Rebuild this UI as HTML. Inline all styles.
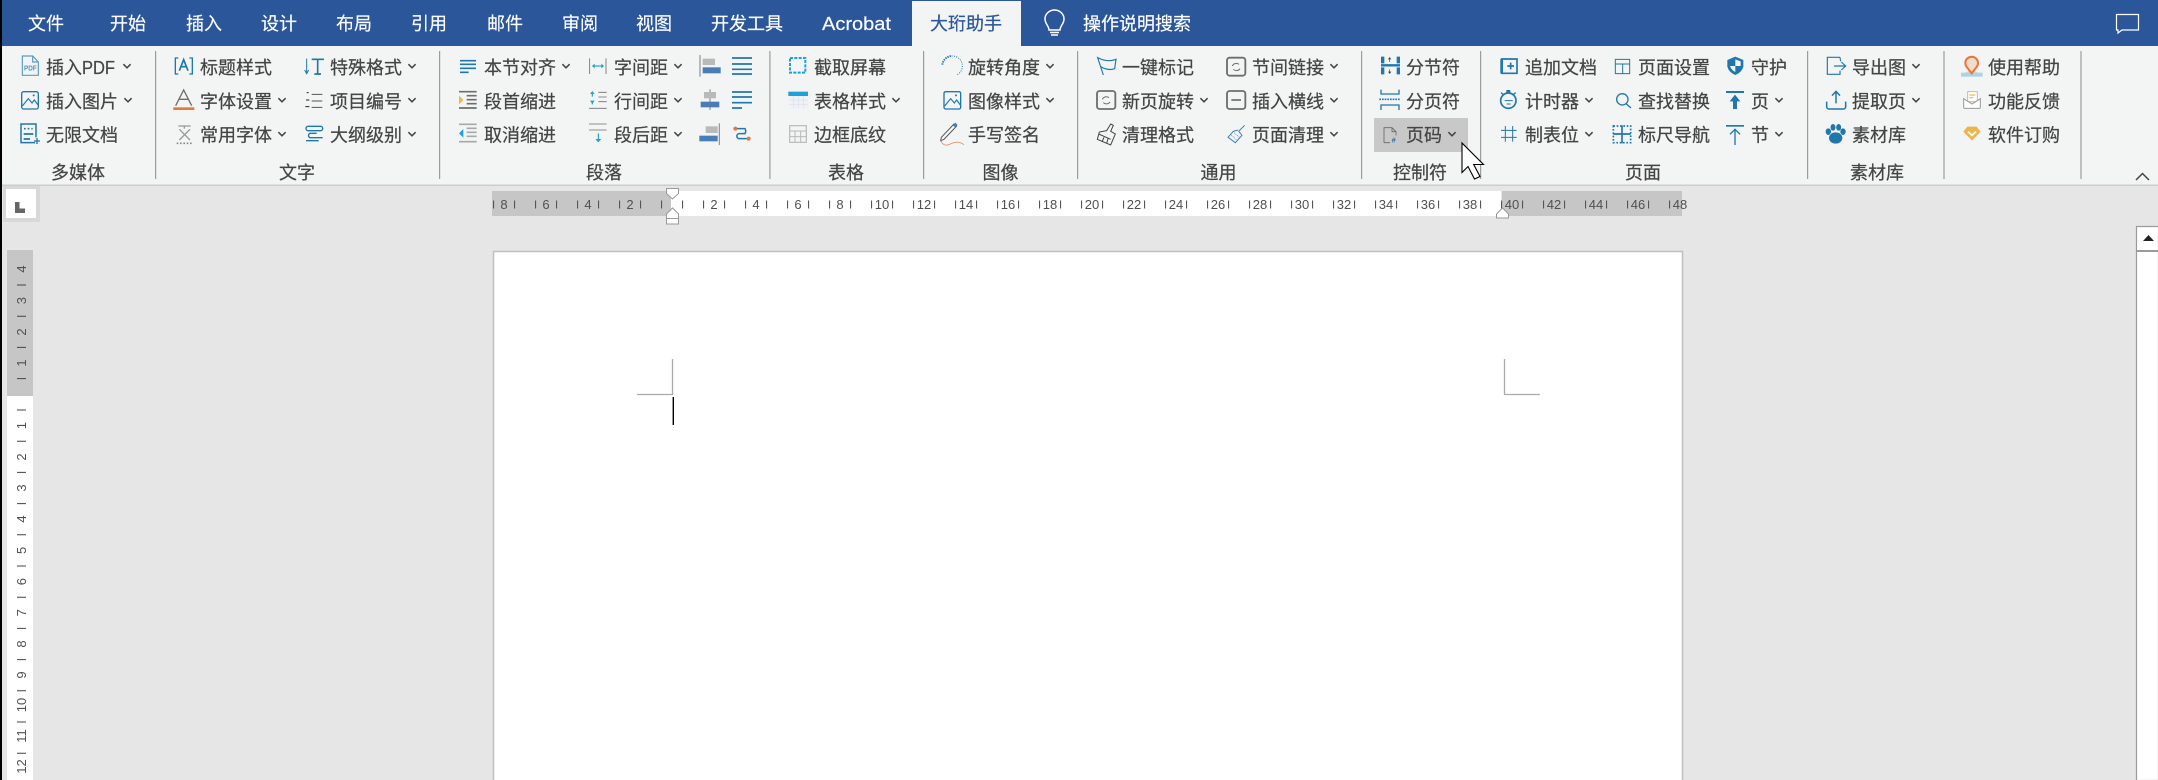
<!DOCTYPE html>
<html><head><meta charset="utf-8"><style>
html,body{margin:0;padding:0;background:#e6e6e6;overflow:hidden}
svg{display:block}
.t{font:18px "Liberation Sans","Noto Sans CJK SC",sans-serif;fill:#444;stroke:#444;stroke-width:.22}
.h{font:18px "Liberation Sans","Noto Sans CJK SC",sans-serif;fill:#fff;stroke:#fff;stroke-width:.15}
.m{text-anchor:middle}
.r{font:13px "Liberation Sans",sans-serif;fill:#505050;text-anchor:middle}
.b{fill:none;stroke:#2077ac}
.c{fill:none;stroke:#444;stroke-width:1.5}
.g{fill:none;stroke:#6e6e6e}
</style></head><body>
<svg xmlns="http://www.w3.org/2000/svg" width="2158" height="780" viewBox="0 0 2158 780">
<rect width="2158" height="780" fill="#e6e6e6"/>
<rect width="2158" height="46" fill="#2b579a"/>
<rect y="46" width="2158" height="139" fill="#f3f4f4"/>
<rect y="184.5" width="2158" height="1.5" fill="#cdcdcd"/>
<rect x="912" y="1" width="109" height="46" fill="#f3f4f4"/>

<!-- tabs -->
<text class="h" x="28" y="30">文件</text><text class="h" x="110" y="30">开始</text><text class="h" x="186" y="30">插入</text><text class="h" x="261" y="30">设计</text><text class="h" x="336" y="30">布局</text><text class="h" x="411" y="30">引用</text><text class="h" x="487" y="30">邮件</text><text class="h" x="562" y="30">审阅</text><text class="h" x="636" y="30">视图</text><text class="h" x="711" y="30">开发工具</text><text class="h" x="822" y="30" textLength="69" lengthAdjust="spacingAndGlyphs">Acrobat</text>
<text class="t" x="930" y="30" style="fill:#2b579a;stroke:#2b579a">大珩助手</text>
<text class="h" x="1083" y="30">操作说明搜索</text>
<path d="M1049 30 C1049 26 1045 24 1045 19 A9.5 9 0 0 1 1064 19 C1064 24 1060 26 1060 30 Z M1050 32.5H1059 M1051 35H1058" fill="none" stroke="#fff" stroke-width="1.5"/>
<path d="M2116.5 14.5H2138.5V30H2122L2118 33V30H2116.5Z" fill="none" stroke="#fff" stroke-width="1.2"/>

<!-- separators -->
<g fill="#9c9c9c"><rect x="155" y="51" width="1.2" height="128"/><rect x="439" y="51" width="1.2" height="128"/><rect x="769.3" y="51" width="1.2" height="128"/><rect x="923" y="51" width="1.2" height="128"/><rect x="1077" y="51" width="1.2" height="128"/><rect x="1361" y="51" width="1.2" height="128"/><rect x="1480" y="51" width="1.2" height="128"/><rect x="1807" y="51" width="1.2" height="128"/><rect x="1943.4" y="51" width="1.2" height="128"/><rect x="2080.4" y="51" width="1.2" height="128"/></g>

<rect x="1374" y="118" width="94" height="34" fill="#c8c8c8"/>

<!-- ribbon text -->
<text class="t" x="46" y="74">插入<tspan textLength="33" lengthAdjust="spacingAndGlyphs">PDF</tspan></text><text class="t" x="46" y="108">插入图片</text><text class="t" x="46" y="141.5">无限文档</text>
<text class="t" x="200" y="74">标题样式</text><text class="t" x="200" y="108">字体设置</text><text class="t" x="200" y="141.5">常用字体</text>
<text class="t" x="330" y="74">特殊格式</text><text class="t" x="330" y="108">项目编号</text><text class="t" x="330" y="141.5">大纲级别</text>
<text class="t" x="484" y="74">本节对齐</text><text class="t" x="484" y="108">段首缩进</text><text class="t" x="484" y="141.5">取消缩进</text>
<text class="t" x="614" y="74">字间距</text><text class="t" x="614" y="108">行间距</text><text class="t" x="614" y="141.5">段后距</text>
<text class="t" x="814" y="74">截取屏幕</text><text class="t" x="814" y="108">表格样式</text><text class="t" x="814" y="141.5">边框底纹</text>
<text class="t" x="968" y="74">旋转角度</text><text class="t" x="968" y="108">图像样式</text><text class="t" x="968" y="141.5">手写签名</text>
<text class="t" x="1122" y="74">一键标记</text><text class="t" x="1122" y="108">新页旋转</text><text class="t" x="1122" y="141.5">清理格式</text>
<text class="t" x="1252" y="74">节间链接</text><text class="t" x="1252" y="108">插入横线</text><text class="t" x="1252" y="141.5">页面清理</text>
<text class="t" x="1406" y="74">分节符</text><text class="t" x="1406" y="108">分页符</text><text class="t" x="1406" y="141.5">页码</text>
<text class="t" x="1525" y="74">追加文档</text><text class="t" x="1525" y="108">计时器</text><text class="t" x="1525" y="141.5">制表位</text>
<text class="t" x="1638" y="74">页面设置</text><text class="t" x="1638" y="108">查找替换</text><text class="t" x="1638" y="141.5">标尺导航</text>
<text class="t" x="1751" y="74">守护</text><text class="t" x="1751" y="108">页</text><text class="t" x="1751" y="141.5">节</text>
<text class="t" x="1852" y="74">导出图</text><text class="t" x="1852" y="108">提取页</text><text class="t" x="1852" y="141.5">素材库</text>
<text class="t" x="1988" y="74">使用帮助</text><text class="t" x="1988" y="108">功能反馈</text><text class="t" x="1988" y="141.5">软件订购</text>

<!-- group labels -->
<text class="t m" x="78" y="179">多媒体</text><text class="t m" x="297" y="179">文字</text><text class="t m" x="604" y="179">段落</text><text class="t m" x="846" y="179">表格</text><text class="t m" x="1000.5" y="179">图像</text><text class="t m" x="1218.5" y="179">通用</text><text class="t m" x="1420" y="179">控制符</text><text class="t m" x="1643" y="179">页面</text><text class="t m" x="1877" y="179">素材库</text>

<!-- chevrons -->
<defs><path id="v" d="M-3.6 -1.8L0 1.8L3.6 -1.8"/></defs>
<g class="c">
<use href="#v" x="127" y="66"/><use href="#v" x="128" y="100"/>
<use href="#v" x="282" y="100"/><use href="#v" x="282" y="134"/>
<use href="#v" x="412" y="66"/><use href="#v" x="412" y="100"/><use href="#v" x="412" y="134"/>
<use href="#v" x="566" y="66"/>
<use href="#v" x="678" y="66"/><use href="#v" x="678" y="100"/><use href="#v" x="678" y="134"/>
<use href="#v" x="896" y="100"/>
<use href="#v" x="1050" y="66"/><use href="#v" x="1050" y="100"/>
<use href="#v" x="1204" y="100"/>
<use href="#v" x="1334" y="66"/><use href="#v" x="1334" y="100"/><use href="#v" x="1334" y="134"/>
<use href="#v" x="1452" y="134"/>
<use href="#v" x="1589" y="100"/><use href="#v" x="1589" y="134"/>
<use href="#v" x="1779" y="100"/><use href="#v" x="1779" y="134"/>
<use href="#v" x="1916" y="66"/><use href="#v" x="1916" y="100"/>
</g>
<path d="M2136 180L2142.5 173.5L2149 180" fill="none" stroke="#444" stroke-width="1.5"/>

<!-- icons: group 8 -->
<g transform="translate(10 50) scale(.33333)">
<path d="M37 18H68L85 36V76H37Z M68 18V36H85" fill="none" stroke="#5c9cc8" stroke-width="3.5"/>
<text x="42" y="62" textLength="38" lengthAdjust="spacingAndGlyphs" style="font:bold 23px 'Liberation Sans',sans-serif;fill:#4f95c4">PDF</text>
<rect x="35" y="125" width="50" height="52" rx="6" class="b" stroke-width="4"/>
<path d="M37 168L55 146L66 159L73 150L84 165" class="b" stroke-width="3.5"/><circle cx="71" cy="136" r="3" fill="#2077ac"/>
<path d="M75 278H33V222H78V262" class="b" stroke-width="4.5"/>
<path d="M42 236H68" class="b" stroke-width="5" stroke-dasharray="5 6"/><path d="M41 252H70M41 267H60" class="b" stroke-width="5"/><path d="M72 273H90M81 264V282" class="b" stroke-width="4"/>
<path d="M505 24H496V72H505M538 24H547V72H538" class="b" stroke-width="4"/><path d="M508 62L521 29L534 62M513 50H529" class="b" stroke-width="5"/>
<path d="M497 167L521 120L545 167M507 148H535" class="g" stroke-width="4"/><rect x="490" y="172" width="63" height="8" fill="#e8773c"/>
<path d="M505 228H542M523 228V236M508 238L540 270M540 238L508 270" fill="none" stroke="#999" stroke-width="4"/><path d="M500 280H546" fill="none" stroke="#888" stroke-width="5" stroke-dasharray="5 5"/>
<path d="M905 28H942M923 28V72M913 72H933" class="b" stroke-width="5"/><path d="M890 26V68M884 60L890 71L896 60" class="b" stroke-width="3"/>
<path d="M905 133H937M905 153H937M905 172H937" fill="none" stroke="#555" stroke-width="3"/><path d="M890 128H896M888 150H898M886 170H898" fill="none" stroke="#222" stroke-width="3"/>
<rect x="888" y="229" width="50" height="13" rx="6" class="b" stroke-width="4"/><path d="M920 250H900A7 7 0 0 0 900 263H938M888 272H926" class="b" stroke-width="4"/>
</g>

<!-- icons: group 9 -->
<g transform="translate(450 50) scale(.33333)">
<path d="M30 32H78M30 43H78M30 55H78M30 67H56" class="b" stroke-width="5"/>
<path d="M27 125H80M50 137H80M50 149H80M50 161H80M27 174H80" class="g" stroke-width="5"/><path d="M27 137L40 150L27 163Z" fill="#efb650"/>
<path d="M27 223H80M50 235H80M50 247H80M50 259H80M27 275H80" fill="none" stroke="#a8a8a8" stroke-width="5"/><path d="M40 237L27 250L40 263Z" fill="#1ea1d6"/>
<path d="M419 25V72M468 25V72" class="g" stroke-width="2.5"/><path d="M428 48H460" fill="none" stroke="#1ea1d6" stroke-width="3.5"/><path d="M434 41L426 48L434 55ZM454 41L462 48L454 55Z" fill="#1ea1d6"/>
<path d="M445 127H470M445 141H470M445 155H470M417 175H470" class="g" stroke-width="2.5"/><path d="M427 130V140M427 153V163" fill="none" stroke="#1ea1d6" stroke-width="3.5"/><path d="M420 132L427 123L434 132ZM420 152L427 162L434 152Z" fill="#1ea1d6"/>
<path d="M417 222H470M417 240H470" class="g" stroke-width="2.5"/><path d="M445 250V268" fill="none" stroke="#1ea1d6" stroke-width="3.5"/><path d="M436 267H454L445 277Z" fill="#1ea1d6"/>
<path d="M750 15V80" fill="none" stroke="#8f8f8f" stroke-width="3.5"/><rect x="758" y="26" width="37" height="19" fill="#b9b9b9"/><rect x="758" y="52" width="54" height="18" fill="#4a7db5"/>
<path d="M780 118V180" fill="none" stroke="#8f8f8f" stroke-width="3.5"/><rect x="762" y="126" width="36" height="19" fill="#b9b9b9"/><rect x="752" y="155" width="56" height="17" fill="#4a7db5"/>
<path d="M808 220V285" fill="none" stroke="#8f8f8f" stroke-width="3.5"/><rect x="767" y="229" width="36" height="20" fill="#b9b9b9"/><rect x="748" y="257" width="55" height="17" fill="#4a7db5"/>
<path d="M846 24H906M846 42H906M846 58H906M846 72H906" class="b" stroke-width="5"/>
<path d="M846 126H906M846 141H906M846 158H906M846 174H876" class="b" stroke-width="5"/>
<path d="M860 236H885A15 15 0 0 1 885 251H868A7.5 7.5 0 0 0 868 266H892" class="b" stroke-width="4.5"/><circle cx="856" cy="236" r="6" fill="#e8773c"/><circle cx="896" cy="266" r="6" fill="#e8773c"/>
</g>

<!-- icons: group 10 -->
<g transform="translate(780 50) scale(.33333)">
<path d="M30 24H76V68H30Z" fill="none" stroke="#1ea1d6" stroke-width="6" stroke-dasharray="9 4"/>
<rect x="26" y="125" width="58" height="50" fill="#f0f2f7"/><path d="M26 150H84M26 163H84M41 138V175M55 138V175M70 138V175" fill="none" stroke="#dde3ee" stroke-width="2.5"/><rect x="25" y="125" width="59" height="13" fill="#1ea1d6"/>
<rect x="29" y="227" width="50" height="50" fill="none" stroke="#b8b8b8" stroke-width="3.5"/><path d="M29 243H79M29 260H79M45 243V277M62 243V277" fill="none" stroke="#b8b8b8" stroke-width="3"/>
<path d="M487 44A30 30 0 0 1 515 18" class="b" stroke-width="6" stroke-dasharray="4 3"/><path d="M515 18A30 30 0 0 1 530 75" class="b" stroke-width="3" stroke-dasharray="3 4"/>
<rect x="492" y="125" width="50" height="52" rx="5" class="b" stroke-width="4"/><path d="M494 168L512 146L523 159L530 150L541 165" class="b" stroke-width="3.5"/><circle cx="528" cy="136" r="3" fill="#2077ac"/>
<path d="M522 222L484 262L482 272L492 268L530 228Z" fill="none" stroke="#555" stroke-width="3"/><path d="M518 226L526 218L532 224L526 232Z" fill="#4a7db5"/>
<path d="M483 272C490 292 505 285 515 280C530 274 540 276 552 284" fill="none" stroke="#e0906a" stroke-width="2.5"/>
</g>

<!-- icons: group 11 -->
<g transform="translate(1090 50) scale(.33333)">
<path d="M40 75L23 23C40 32 60 35 78 28L74 56C62 60 48 60 32 50" class="b" stroke-width="3.5"/>
<rect x="411" y="23" width="55" height="54" rx="8" class="g" stroke-width="5.5"/><path d="M447 43A13 13 0 0 0 427 48M430 58A13 13 0 0 0 450 56" fill="none" stroke="#6e6e6e" stroke-width="3"/>
<rect x="21" y="123" width="55" height="54" rx="8" class="g" stroke-width="5.5"/><path d="M57 143A13 13 0 0 0 37 148M40 158A13 13 0 0 0 60 156" fill="none" stroke="#6e6e6e" stroke-width="3"/>
<rect x="411" y="123" width="55" height="54" rx="8" class="g" stroke-width="5.5"/><path d="M424 150H453" class="g" stroke-width="5"/>
<path d="M62 222L70 226L62 244L76 252L62 285L22 268L28 246L50 242Z M26 252L62 268M36 276L42 262M50 280L54 266" fill="none" stroke="#444" stroke-width="3"/>
<path d="M464 226L446 244L456 256L436 278L414 262L430 244L444 240" fill="none" stroke="#3d80c4" stroke-width="3"/><path d="M424 255L440 270M432 248L448 262" fill="none" stroke="#3d80c4" stroke-width="2" stroke-dasharray="3 3"/>
<path d="M878 20V40M878 52V73M925 20V40M925 52V73" class="b" stroke-width="10"/><path d="M873 46H930" class="b" stroke-width="7"/><path d="M899 24V36M899 58V68" fill="none" stroke="#444" stroke-width="2"/><path d="M894 28L899 21L904 28ZM894 65L899 72L904 65Z" fill="#444"/>
<path d="M873 119V132H927V119M873 180V165H927V180" class="b" stroke-width="4"/><path d="M868 148H932" fill="none" stroke="#2077ac" stroke-width="5" stroke-dasharray="5 3"/>
<path d="M882 278V233H906L918 245V256M906 233V245H918M900 278H882" fill="none" stroke="#666" stroke-width="2.5"/>
<text x="905" y="278" style="font:bold 22px 'Liberation Sans',sans-serif;fill:#2a6db0">#</text>
</g>

<!-- cursor -->
<path d="M1462 143V172.5L1468 166.5L1474.5 179L1480 176.5L1473.7 164.5H1483.5Z" fill="#fff" stroke="#000" stroke-width="1.1"/>

<!-- icons: group 12 -->
<g transform="translate(1490 50) scale(.33333)">
<path d="M46 27H81V70H35V27H46" class="b" stroke-width="5"/><path d="M35 27V70" class="b" stroke-width="8"/><path d="M52 48H72M62 38V58" class="b" stroke-width="5"/>
<path d="M376 28H419V71H376ZM376 42H419M398 42V71" class="b" stroke-width="3"/>
<path d="M736 20L760 30V50Q755 68 736 75Q717 68 712 50V30Z" fill="#2077ac"/><path d="M736 28L752 34V48H736ZM720 48H736V66Q724 60 720 48Z" fill="#f3f4f4"/>
<circle cx="55" cy="152" r="23" class="b" stroke-width="5"/><rect x="49" y="120" width="12" height="10" fill="#2077ac"/><path d="M33 128L40 134M77 128L70 134" class="b" stroke-width="4"/><path d="M44 152H68M50 162H62" class="b" stroke-width="3"/>
<circle cx="397" cy="148" r="17" class="b" stroke-width="4"/><path d="M408 161L423 174" class="b" stroke-width="4"/>
<rect x="708" y="123" width="54" height="6" fill="#2077ac"/><path d="M735 134L751 154H741V177H729V154H719Z" fill="#2077ac"/>
<path d="M46 228V275M68 228V275M33 241H80M33 262H80" class="b" stroke-width="3"/>
<path d="M370 228H422V278H370Z" class="b" stroke-width="5" stroke-dasharray="5 5"/><path d="M370 252H422M396 226V280" class="b" stroke-width="5"/>
<rect x="708" y="225" width="54" height="5" fill="#2077ac"/><path d="M735 238V285M720 253L735 238L750 253" class="b" stroke-width="4"/>
<path d="M1050 22H1012V73H1050V62M1050 22L1052 34" class="b" stroke-width="3.5"/><path d="M1032 48H1066M1054 36L1067 48L1054 60" class="b" stroke-width="3.5"/>
<path d="M1010 155V170A7 7 0 0 0 1017 177H1060A7 7 0 0 0 1067 170V155" class="b" stroke-width="4.5"/><path d="M1038 160V125M1026 137L1038 124L1050 137" class="b" stroke-width="4.5"/>
<g fill="#2077ac"><ellipse cx="1037" cy="264" rx="20" ry="17"/><ellipse cx="1015" cy="245" rx="8" ry="10"/><ellipse cx="1029" cy="232" rx="7.5" ry="10"/><ellipse cx="1046" cy="232" rx="7.5" ry="10"/><ellipse cx="1059" cy="245" rx="8" ry="10"/></g>
<path d="M1425 68L1445 60L1465 68Z" fill="#f5c9a0"/><rect x="1413" y="68" width="65" height="12" fill="#a8d5e8"/>
<path d="M1445 70L1431 52A19 19 0 1 1 1459 52Z" fill="#f2dccd" stroke="#e8773c" stroke-width="6"/>
<rect x="1433" y="125" width="29" height="30" fill="#fff" stroke="#bbb" stroke-width="3"/><path d="M1438 135H1456M1438 143H1450" fill="none" stroke="#efb650" stroke-width="3.5"/>
<path d="M1421 146V172A3 3 0 0 0 1424 175H1468A3 3 0 0 0 1471 172V146L1446 162Z" fill="#fff" stroke="#999" stroke-width="3"/>
<path d="M1432 230H1460L1472 245L1446 272L1420 245Z" fill="#eeb64a"/><path d="M1434 245L1446 256L1458 245" fill="none" stroke="#fff" stroke-width="5"/>
</g>

<!-- tab selector -->
<rect x="3" y="186" width="37" height="36" fill="#d8d8d8"/><rect x="6" y="189" width="30" height="29" fill="#fff"/>
<path d="M15 202H19.5V208.5H25V213H15Z" fill="#666"/>

<!-- h ruler -->
<rect x="492" y="191" width="179" height="25" fill="#c6c6c6"/><rect x="671" y="191" width="830" height="25" fill="#fff"/><rect x="1502" y="191" width="180" height="25" fill="#c6c6c6"/>
<line x1="493" y1="204.5" x2="1680" y2="204.5" stroke="#555" stroke-width="8" stroke-dasharray="1.1 19.9"/>
<g>
<text class="r" x="504" y="209">8</text><text class="r" x="546" y="209">6</text><text class="r" x="588" y="209">4</text><text class="r" x="630" y="209">2</text>
<text class="r" x="714" y="209">2</text><text class="r" x="756" y="209">4</text><text class="r" x="798" y="209">6</text><text class="r" x="840" y="209">8</text><text class="r" x="882" y="209">10</text><text class="r" x="924" y="209">12</text><text class="r" x="966" y="209">14</text><text class="r" x="1008" y="209">16</text><text class="r" x="1050" y="209">18</text><text class="r" x="1092" y="209">20</text><text class="r" x="1134" y="209">22</text><text class="r" x="1176" y="209">24</text><text class="r" x="1218" y="209">26</text><text class="r" x="1260" y="209">28</text><text class="r" x="1302" y="209">30</text><text class="r" x="1344" y="209">32</text><text class="r" x="1386" y="209">34</text><text class="r" x="1428" y="209">36</text><text class="r" x="1470" y="209">38</text><text class="r" x="1512" y="209">40</text><text class="r" x="1554" y="209">42</text><text class="r" x="1596" y="209">44</text><text class="r" x="1638" y="209">46</text><text class="r" x="1680" y="209">48</text>
</g>
<!-- indent markers -->
<path d="M666.5 188.5H678.5V193.5L672.5 199L666.5 193.5Z" fill="#fff" stroke="#999"/>
<path d="M672.5 208L678.5 214V224H666.5V214Z M666.5 218.5H678.5" fill="#fff" stroke="#999"/>
<path d="M1502.5 208L1508.5 214V218H1496.5V214Z" fill="#fff" stroke="#999"/>

<!-- v ruler -->
<rect x="7" y="250" width="26" height="146" fill="#c6c6c6"/><rect x="7" y="396" width="26" height="384" fill="#fff"/>
<path d="M17 285H26M17 316.2H26M17 347.4H26M17 378.6H26M17 410H26M17 441.2H26M17 472.4H26M17 503.6H26M17 534.8H26M17 566H26M17 597.2H26M17 628.4H26M17 659.6H26M17 690.8H26M17 722H26M17 753.2H26" stroke="#444" stroke-width="1" fill="none"/>
<g>
<text class="r" transform="translate(26 269) rotate(-90)">4</text><text class="r" transform="translate(26 300.6) rotate(-90)">3</text><text class="r" transform="translate(26 332) rotate(-90)">2</text><text class="r" transform="translate(26 363) rotate(-90)">1</text>
<text class="r" transform="translate(26 425.6) rotate(-90)">1</text><text class="r" transform="translate(26 457) rotate(-90)">2</text><text class="r" transform="translate(26 488) rotate(-90)">3</text><text class="r" transform="translate(26 519) rotate(-90)">4</text><text class="r" transform="translate(26 550.4) rotate(-90)">5</text><text class="r" transform="translate(26 581.6) rotate(-90)">6</text><text class="r" transform="translate(26 612.8) rotate(-90)">7</text><text class="r" transform="translate(26 644) rotate(-90)">8</text><text class="r" transform="translate(26 675) rotate(-90)">9</text><text class="r" transform="translate(26 705) rotate(-90)">10</text><text class="r" transform="translate(26 736) rotate(-90)">11</text><text class="r" transform="translate(26 766.5) rotate(-90)">12</text>
</g>

<!-- page -->
<rect x="493.5" y="251.5" width="1189" height="540" fill="#fff" stroke="#c0c0c0" stroke-width="1.5"/>
<path d="M672.5 359V394.5H637M1504.5 359V394.5H1540" fill="none" stroke="#ababab" stroke-width="1.3"/>
<rect x="672.6" y="397" width="1.4" height="28" fill="#000"/>

<!-- scrollbar -->
<rect x="2136.5" y="226.5" width="22" height="554" fill="#fff" stroke="#9a9a9a" stroke-width="1.2"/>
<rect x="2137" y="250" width="21" height="2" fill="#9a9a9a"/>
<path d="M2143 241L2148.5 235L2154 241Z" fill="#222"/>

<rect width="2" height="780" fill="#000"/>
</svg>
</body></html>
